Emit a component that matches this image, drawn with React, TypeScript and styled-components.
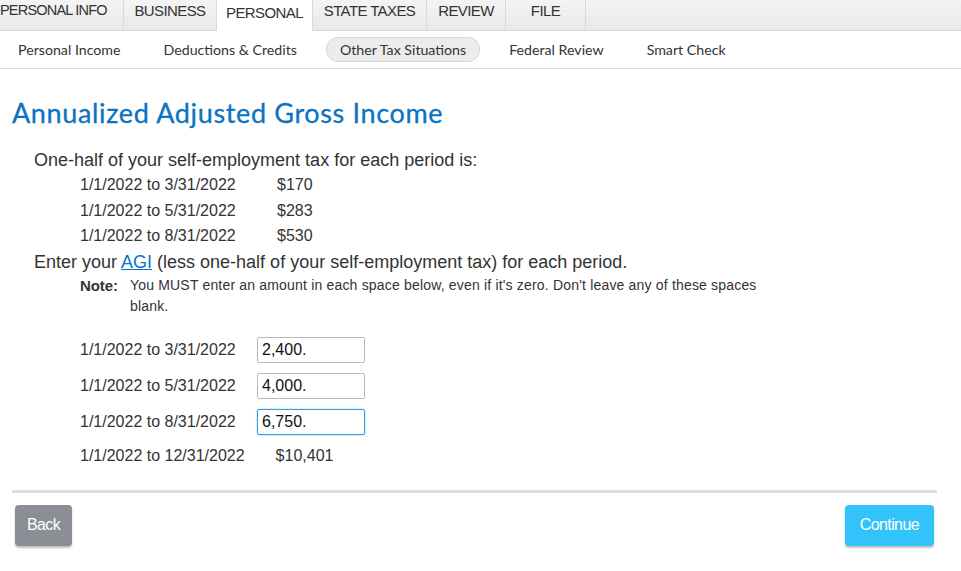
import React from "react";
import styled, { createGlobalStyle } from "styled-components";

const GlobalStyle = createGlobalStyle`
  html, body {
    margin: 0;
    padding: 0;
    background: #fff;
  }
  body {
    font-family: "Liberation Sans", Arial, sans-serif;
    color: #333;
  }
`;

const mainTabs = ["PERSONAL INFO", "BUSINESS", "PERSONAL", "STATE TAXES", "REVIEW", "FILE"];
const tabWidths = [124, 93, 96, 114, 79, 80];
const subTabs = ["Personal Income", "Deductions & Credits", "Other Tax Situations", "Federal Review", "Smart Check"];

const selfEmployment = [
  { period: "1/1/2022 to 3/31/2022", amount: "$170" },
  { period: "1/1/2022 to 5/31/2022", amount: "$283" },
  { period: "1/1/2022 to 8/31/2022", amount: "$530" },
];

const agiRows = [
  { period: "1/1/2022 to 3/31/2022", value: "2,400.", focused: false },
  { period: "1/1/2022 to 5/31/2022", value: "4,000.", focused: false },
  { period: "1/1/2022 to 8/31/2022", value: "6,750.", focused: true },
];

export default function App() {
  return (
    <>
      <GlobalStyle />
      <Page>
        <TabBar>
          {mainTabs.map((t, i) => (
            <Tab key={t} $active={t === "PERSONAL"} $first={i === 0} $width={tabWidths[i]}>
              {t}
            </Tab>
          ))}
          <TabFill />
        </TabBar>
        <SubNav>
          {subTabs.map((s) => (
            <SubTab key={s} $active={s === "Other Tax Situations"}>
              {s}
            </SubTab>
          ))}
        </SubNav>

        <Content>
          <Title>Annualized Adjusted Gross Income</Title>

          <Lead>One-half of your self-employment tax for each period is:</Lead>
          <PeriodList>
            {selfEmployment.map((r) => (
              <PeriodRow key={r.period}>
                <PeriodLabel>{r.period}</PeriodLabel>
                <span>{r.amount}</span>
              </PeriodRow>
            ))}
          </PeriodList>

          <Lead>
            Enter your <AgiLink href="#">AGI</AgiLink> (less one-half of your self-employment tax) for each period.
          </Lead>
          <Note>
            <NoteLabel>Note:</NoteLabel>
            <NoteText>
              You MUST enter an amount in each space below, even if it's zero. Don't leave any of these spaces blank.
            </NoteText>
          </Note>

          <InputList>
            {agiRows.map((r) => (
              <InputRow key={r.period}>
                <InputLabel>{r.period}</InputLabel>
                <AmountInput $focused={r.focused} defaultValue={r.value} readOnly />
              </InputRow>
            ))}
            <TotalRow>
              <span>1/1/2022 to 12/31/2022</span>
              <span>$10,401</span>
            </TotalRow>
          </InputList>
        </Content>

        <Divider />
        <Footer>
          <Button $variant="back">Back</Button>
          <Button $variant="continue">Continue</Button>
        </Footer>
      </Page>
    </>
  );
}

const Page = styled.div`
  width: 961px;
  height: 571px;
  overflow: hidden;
`;

const TabBar = styled.div`
  display: flex;
  height: 31px;
  box-sizing: border-box;
  background: linear-gradient(#f4f4f4, #e8e8e8);
  border-bottom: 1px solid #d6d6d6;
`;

const Tab = styled.div<{ $active?: boolean; $first?: boolean; $width: number }>`
  width: ${(p) => p.$width}px;
  flex-shrink: 0;
  box-sizing: border-box;
  overflow: hidden;
  white-space: nowrap;
  border-right: 1px solid #d8d8d8;
  display: flex;
  justify-content: ${(p) => (p.$first ? "flex-start" : "center")};
  padding-top: ${(p) => (p.$active ? 4 : 2)}px;
  font-size: ${(p) => (p.$first ? 14.5 : 15)}px;
  letter-spacing: ${(p) => (p.$first ? -0.8 : -0.6)}px;
  color: #333;
  background: ${(p) => (p.$active ? "#fff" : "transparent")};
  margin-bottom: ${(p) => (p.$active ? "-1px" : "0")};
`;

const TabFill = styled.div`
  flex: 1;
`;

const SubNav = styled.div`
  display: flex;
  align-items: center;
  height: 37px;
  padding-left: 4px;
  border-bottom: 1px solid #dcdcdc;
`;

const SubTab = styled.div<{ $active?: boolean }>`
  font-family: "Lato", "Open Sans", sans-serif;
  font-size: 14.2px;
  color: #333;
  padding: 3px 13px;
  margin-right: 15px;
  border-radius: 12px;
  background: ${(p) => (p.$active ? "#ececec" : "transparent")};
  border: 1px solid ${(p) => (p.$active ? "#d6d6d6" : "transparent")};
`;

const Content = styled.div`
  padding: 0 12px;
`;

const Title = styled.h1`
  margin: 27px 0 20px;
  font-family: "Lato", "Open Sans", sans-serif;
  font-weight: 400;
  font-size: 27px;
  letter-spacing: 0.65px;
  color: #0a73c2;
  -webkit-text-stroke: 0.3px #0a73c2;
`;

const Lead = styled.div`
  font-size: 18px;
  line-height: 22px;
  margin-left: 22px;
  color: #333;
`;

const PeriodList = styled.div`
  margin: 1px 0 2px 68px;
`;

const PeriodRow = styled.div`
  display: flex;
  font-size: 16px;
  line-height: 25.5px;
`;

const PeriodLabel = styled.span`
  width: 197px;
`;

const AgiLink = styled.a`
  color: #0b74c4;
  text-decoration: underline;
`;

const Note = styled.div`
  display: flex;
  margin: 2px 0 0 68px;
  width: 700px;
  font-size: 14px;
  line-height: 21px;
`;

const NoteLabel = styled.span`
  font-weight: bold;
  font-size: 15px;
  letter-spacing: -0.1px;
  width: 50px;
  flex-shrink: 0;
`;

const NoteText = styled.span`
  color: #333;
  letter-spacing: 0.18px;
`;

const InputList = styled.div`
  margin: 20px 0 0 68px;
  display: flex;
  flex-direction: column;
  gap: 10px;
`;

const InputRow = styled.div`
  display: flex;
  align-items: center;
  height: 26px;
  font-size: 16px;
`;

const InputLabel = styled.span`
  width: 177px;
`;

const AmountInput = styled.input<{ $focused?: boolean }>`
  width: 108px;
  height: 26px;
  box-sizing: border-box;
  padding: 0 4px;
  font-family: "Liberation Sans", Arial, sans-serif;
  font-size: 16px;
  color: #111;
  border: 1px solid ${(p) => (p.$focused ? "#3a9be0" : "#b8b8b8")};
  box-shadow: ${(p) => (p.$focused ? "0 0 2px #7fbff0" : "none")};
  border-radius: 2px;
  outline: none;
`;

const TotalRow = styled.div`
  display: flex;
  gap: 31px;
  font-size: 16px;
  margin-top: 2px;
`;

const Divider = styled.div`
  margin: 25px 24px 0 12px;
  height: 3px;
  background: #dedede;
`;

const Footer = styled.div`
  display: flex;
  justify-content: space-between;
  padding: 12px 27px 0 15px;
`;

const Button = styled.button<{ $variant: "back" | "continue" }>`
  height: 41px;
  padding: 0 ${(p) => (p.$variant === "back" ? 12 : 15)}px;
  border: none;
  border-radius: 4px;
  font-family: "Liberation Sans", Arial, sans-serif;
  font-size: 16px;
  letter-spacing: -0.6px;
  color: #fff;
  background: ${(p) => (p.$variant === "back" ? "#8b8e94" : "#33c3fb")};
  box-shadow: 0 2px 2px rgba(0, 0, 0, 0.25);
`;
